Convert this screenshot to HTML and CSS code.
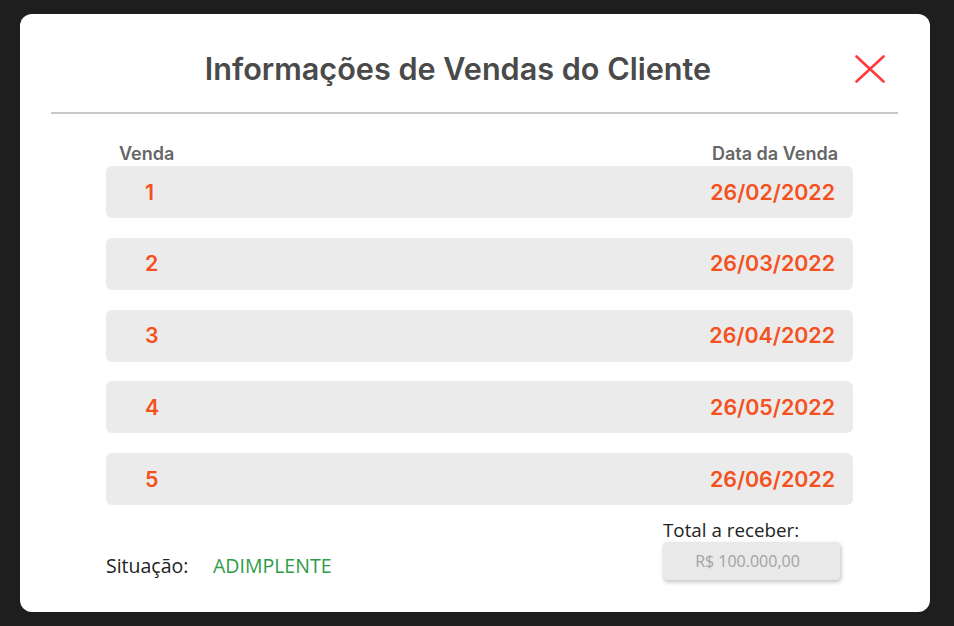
FILE: index.html
```html
<!DOCTYPE html>
<html lang="pt-BR">
<head>
<meta charset="utf-8">
<title>Informações de Vendas do Cliente</title>
<link rel="stylesheet" href="styles.css">
</head>
<body>
<div class="modal">
  <header class="modal-header">
    <h1 class="modal-title">Informações de Vendas do Cliente</h1>
    <button class="close-btn" aria-label="Fechar">
      <svg width="30" height="28" viewBox="0 0 30 28"><path d="M1.5 1.5 L28.5 26.5 M28.5 1.5 L1.5 26.5" stroke="#ff3a3a" stroke-width="2.6" stroke-linecap="round" fill="none"/></svg>
    </button>
  </header>
  <section class="sales">
    <div class="sales-head">
      <span>Venda</span>
      <span>Data da Venda</span>
    </div>
    <ul class="sales-list">
      <li class="sale-row"><span class="sale-num">1</span><span class="sale-date">26/02/2022</span></li>
      <li class="sale-row"><span class="sale-num">2</span><span class="sale-date">26/03/2022</span></li>
      <li class="sale-row"><span class="sale-num">3</span><span class="sale-date">26/04/2022</span></li>
      <li class="sale-row"><span class="sale-num">4</span><span class="sale-date">26/05/2022</span></li>
      <li class="sale-row"><span class="sale-num">5</span><span class="sale-date">26/06/2022</span></li>
    </ul>
    <footer class="sales-footer">
      <div class="status"><span class="status-label">Situação:</span><span class="status-value">ADIMPLENTE</span></div>
      <div class="total">
        <div class="total-label">Total a receber:</div>
        <div class="total-box">R$ 100.000,00</div>
      </div>
    </footer>
  </section>
</div>
</body>
</html>
```
FILE: styles.css
```css
* { box-sizing: border-box; }
html, body { margin: 0; }
body {
  background: #1e1e1e;
  padding: 14px 24px 14px 20px;
  font-family: Inter, "Noto Sans", sans-serif;
}
.modal {
  width: 910px;
  height: 598px;
  background: #ffffff;
  border-radius: 12px;
  padding: 0 32px 0 31px;
}
.modal-header {
  display: flex;
  align-items: center;
  height: 100px;
  padding-top: 11px;
  border-bottom: 2px solid #c8c8c8;
}
.modal-title {
  flex: 1;
  margin: 0;
  padding-left: 10px;
  text-align: center;
  font-size: 30.6px;
  line-height: 36px;
  font-weight: 600;
  color: #4a4a4a;
}
.close-btn {
  width: 30px;
  height: 28px;
  margin-right: 13px;
  padding: 0;
  border: 0;
  background: none;
  display: flex;
}
.sales {
  margin: 0 45px 0 55px;
  padding-top: 30px;
}
.sales-head {
  display: flex;
  justify-content: space-between;
  padding: 0 15px 0 13px;
  font-size: 18px;
  line-height: 20px;
  font-weight: 600;
  color: #666666;
  margin-bottom: 2px;
}
.sales-list {
  list-style: none;
  margin: 0;
  padding: 0;
  display: flex;
  flex-direction: column;
  gap: 19.8px;
}
.sale-row {
  height: 52px;
  background: #ebebeb;
  border-radius: 6px;
  display: flex;
  align-items: center;
  justify-content: space-between;
  padding: 0 18px 1px 39px;
  font-size: 21.4px;
  font-weight: 600;
  color: #f4511e;
}
.sales-footer {
  display: flex;
  justify-content: space-between;
  align-items: flex-end;
  margin-top: 14px;
  padding-right: 13px;
  font-family: "Open Sans", "Noto Sans", sans-serif;
}
.status {
  display: flex;
  font-size: 19.5px;
  line-height: 22px;
  margin-bottom: 3px;
}
.status-label { color: #222222; width: 107px; }
.status-value { color: #2e9c45; }
.total-label {
  font-size: 18.8px;
  line-height: 22px;
  color: #222222;
  margin-bottom: 1px;
}
.total-box {
  width: 177px;
  height: 38px;
  background: #e9e9e9;
  border-radius: 4px;
  box-shadow: 1px 2px 4px rgba(0,0,0,0.25);
  display: flex;
  align-items: center;
  justify-content: center;
  padding-right: 8px;
  font-size: 16px;
  color: #a3a3a3;
}
```
